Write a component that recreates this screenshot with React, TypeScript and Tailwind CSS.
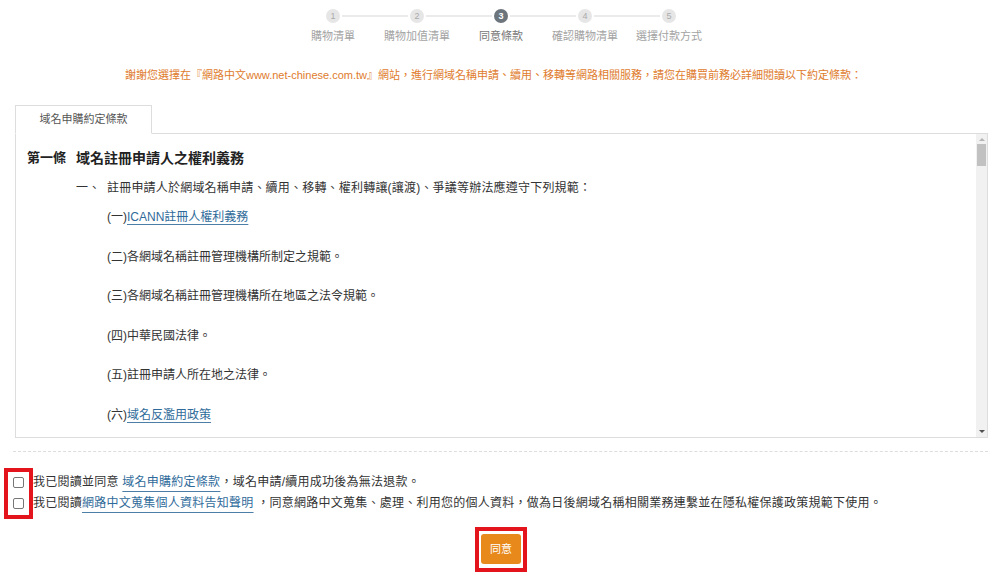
const steps = [
  { n: 1, label: "購物清單" },
  { n: 2, label: "購物加值清單" },
  { n: 3, label: "同意條款" },
  { n: 4, label: "確認購物清單" },
  { n: 5, label: "選擇付款方式" },
];

const items: { prefix: string; text: string; link?: boolean }[] = [
  { prefix: "(一)", text: "ICANN註冊人權利義務", link: true },
  { prefix: "(二)", text: "各網域名稱註冊管理機構所制定之規範。" },
  { prefix: "(三)", text: "各網域名稱註冊管理機構所在地區之法令規範。" },
  { prefix: "(四)", text: "中華民國法律。" },
  { prefix: "(五)", text: "註冊申請人所在地之法律。" },
  { prefix: "(六)", text: "域名反濫用政策", link: true },
];

function Stepper() {
  return (
    <div className="flex flex-col items-center pt-[9px] ml-[2px]">
      {/* circles + lines */}
      <div className="flex items-center">
        {steps.map((s, i) => (
          <div key={s.n} className="flex items-center">
            <div
              className={`w-[14px] h-[14px] rounded-full flex items-center justify-center text-[9px] leading-none ${
                s.n === 3 ? "bg-[#6d757c] text-white font-bold" : "bg-[#e6e6e6] text-[#aaa]"
              }`}
            >
              {s.n}
            </div>
            {i < steps.length - 1 && <div className="w-[66px] h-[2px] mx-[2px] bg-[#ebebeb]" />}
          </div>
        ))}
      </div>
      {/* labels */}
      <div className="flex mt-[5px]">
        {steps.map((s) => (
          <div
            key={s.n}
            className={`w-[84px] text-center text-[11px] leading-[16px] ${
              s.n === 3 ? "text-[#777]" : "text-[#a3a3a3]"
            }`}
          >
            {s.label}
          </div>
        ))}
      </div>
    </div>
  );
}

function Scrollbar() {
  return (
    <div className="w-[11px] bg-[#f1f1f1] flex flex-col items-center shrink-0">
      <div className="mt-[4px] w-0 h-0 border-l-[3px] border-r-[3px] border-b-[3px] border-l-transparent border-r-transparent border-b-[#b5b5b5]" />
      <div className="mt-[3px] w-[9px] h-[22px] bg-[#c1c1c1]" />
      <div className="flex-1" />
      <div className="mb-[4px] w-0 h-0 border-l-[3px] border-r-[3px] border-t-[3px] border-l-transparent border-r-transparent border-t-[#505050]" />
    </div>
  );
}

export default function App() {
  return (
    <div
      className="w-[1000px] h-[583px] bg-white text-[#333] overflow-hidden"
      style={{ fontFamily: '"Liberation Sans", "Noto Sans CJK TC", sans-serif' }}
    >
      <Stepper />

      {/* Notice */}
      <p className="mt-[23px] pr-[13px] text-center text-[11px] leading-[16px] text-[#e07b2c]">
        謝謝您選擇在『網路中文www.net-chinese.com.tw』網站，進行網域名稱申請、續用、移轉等網路相關服務，請您在購買前務必詳細閱讀以下約定條款：
      </p>

      <div className="pl-[15px] pr-[12px] mt-[22px]">
        {/* Tab */}
        <div className="flex">
          <div className="relative -mb-px w-[137px] h-[29px] border border-[#ddd] border-b-white bg-white flex items-center justify-center text-[11px] text-[#555]">
            域名申購約定條款
          </div>
        </div>

        {/* Panel */}
        <div className="h-[305px] border border-[#ddd] flex">
          <div className="flex-1 overflow-hidden pl-[11px] pt-[14px]">
            <div className="flex items-center leading-[20px] text-[#222] font-bold">
              <span className="w-[49px] text-[13px]">第一條</span>
              <span className="text-[14px]">域名註冊申請人之權利義務</span>
            </div>
            <div className="flex mt-[10px] ml-[49px] text-[12px] leading-[20px] tracking-[0.2px]">
              <span className="w-[31px]">一、</span>
              <span>註冊申請人於網域名稱申請、續用、移轉、權利轉讓(讓渡)、爭議等辦法應遵守下列規範：</span>
            </div>
            <div className="flex flex-col gap-[19.6px] mt-[9px] ml-[80px] text-[12px] leading-[20px]">
              {items.map((it) => (
                <div key={it.prefix}>
                  {it.prefix}
                  {it.link ? (
                    <a
                      href="#"
                      className="text-[#2f6b9a] underline underline-offset-[3px] decoration-[#4d7ea8]"
                    >
                      {it.text}
                    </a>
                  ) : (
                    it.text
                  )}
                </div>
              ))}
            </div>
          </div>
          <Scrollbar />
        </div>

        {/* Divider */}
        <div className="mt-[13px] -ml-[2px] border-t border-dashed border-[#ddd]" />
      </div>

      {/* Agreements */}
      <div className="relative mt-[20px] text-[12px] leading-[21px] tracking-[0.25px]">
        <div className="flex items-center pl-[13px]">
          <input type="checkbox" className="appearance-none w-[11px] h-[11px] border border-[#767676] rounded-[2px] bg-white mr-[9px]" />
          <span>
            我已閱讀並同意{" "}
            <a href="#" className="text-[#2f6b9a] underline underline-offset-[5px] decoration-[#4d7ea8]">
              域名申購約定條款
            </a>
            ，域名申請/續用成功後為無法退款。
          </span>
        </div>
        <div className="flex items-center pl-[13px]">
          <input type="checkbox" className="appearance-none w-[11px] h-[11px] border border-[#767676] rounded-[2px] bg-white mr-[9px]" />
          <span>
            我已閱讀
            <a href="#" className="text-[#2f6b9a] underline underline-offset-[5px] decoration-[#4d7ea8]">
              網路中文蒐集個人資料告知聲明
            </a>{" "}
            ，同意網路中文蒐集、處理、利用您的個人資料，做為日後網域名稱相關業務連繫並在隱私權保護政策規範下使用。
          </span>
        </div>
        {/* highlight frame */}
        <div className="absolute left-[4px] -top-[4px] w-[29px] h-[51px] border-[4px] border-[#e3141b] pointer-events-none" />
      </div>

      {/* Submit */}
      <div className="flex justify-center mt-[13px] ml-[2px]">
        <div className="border-[4px] border-[#e3141b] px-[2px] pt-[3px] pb-[4px]">
          <button className="w-[40px] h-[30px] rounded-[3px] bg-[#e8891c] text-white text-[11px]">同意</button>
        </div>
      </div>
    </div>
  );
}
